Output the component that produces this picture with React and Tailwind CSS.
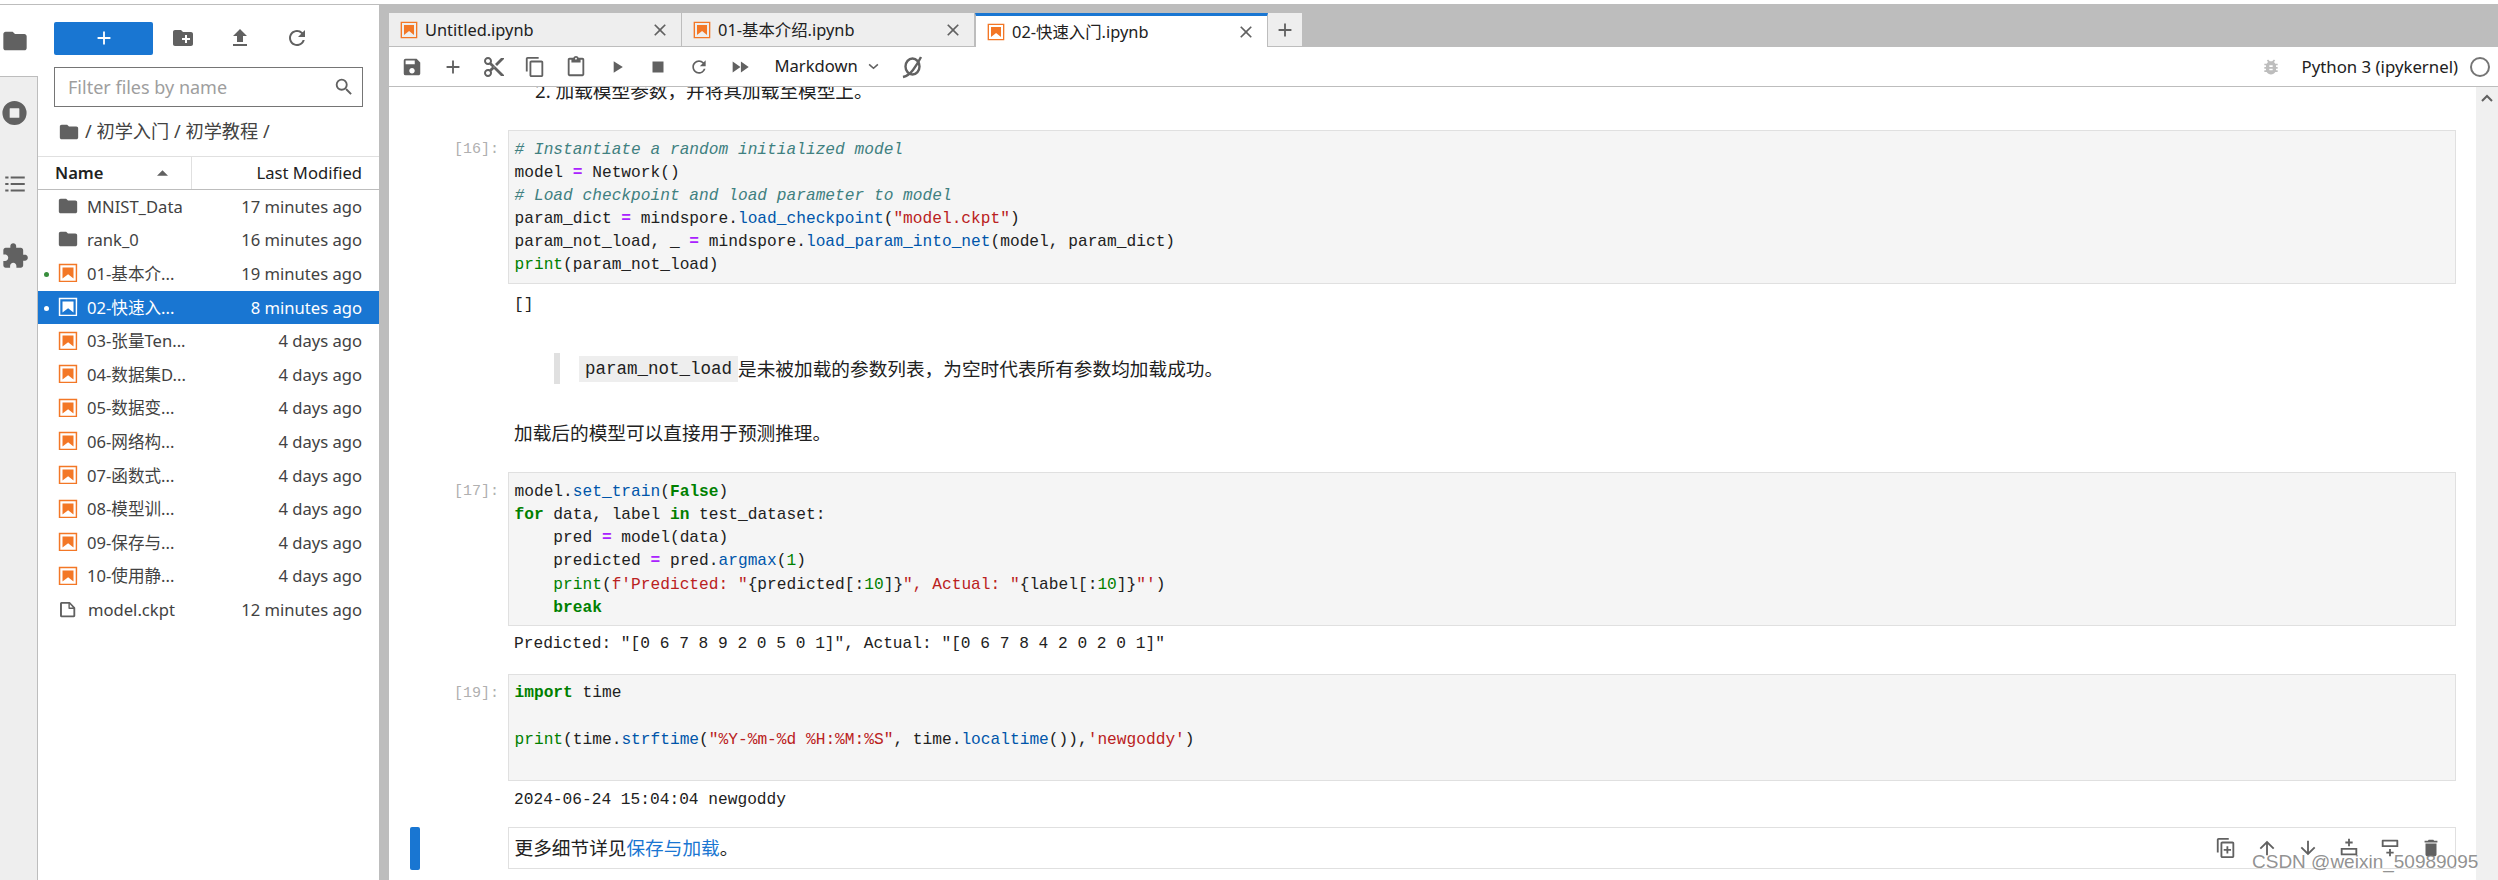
import React from "react";

const P = {
  folder: "M10 4H4c-1.1 0-1.99.9-1.99 2L2 18c0 1.1.9 2 2 2h16c1.1 0 2-.9 2-2V8c0-1.1-.9-2-2-2h-8l-2-2z",
  ext: "M20.5 11H19V7c0-1.1-.9-2-2-2h-4V3.5C13 2.12 11.88 1 10.5 1S8 2.12 8 3.5V5H4c-1.1 0-1.99.9-1.99 2v3.8H3.5c1.49 0 2.7 1.21 2.7 2.7s-1.21 2.7-2.7 2.7H2V20c0 1.1.9 2 2 2h3.8v-1.5c0-1.49 1.21-2.7 2.7-2.7 1.49 0 2.7 1.21 2.7 2.7V22H17c1.1 0 2-.9 2-2v-4h1.5c1.38 0 2.5-1.12 2.5-2.5S21.88 11 20.5 11z",
  newFolder: "M20 6h-8l-2-2H4c-1.11 0-1.99.89-1.99 2L2 18c0 1.11.89 2 2 2h16c1.11 0 2-.89 2-2V8c0-1.11-.89-2-2-2zm-1 8h-3v3h-2v-3h-3v-2h3V9h2v3h3v2z",
  upload: "M9 16h6v-6h4l-7-7-7 7h4zm-4 2h14v2H5z",
  refresh: "M17.65 6.35A7.958 7.958 0 0 0 12 4c-4.42 0-7.99 3.58-7.99 8s3.57 8 7.99 8c3.73 0 6.84-2.55 7.73-6h-2.08A5.99 5.99 0 0 1 12 18c-3.31 0-6-2.69-6-6s2.69-6 6-6c1.66 0 3.14.69 4.22 1.78L13 11h7V4l-2.35 2.35z",
  search: "M15.5 14h-.79l-.28-.27A6.471 6.471 0 0 0 16 9.5 6.5 6.5 0 1 0 9.5 16c1.61 0 3.09-.59 4.23-1.57l.27.28v.79l5 4.99L20.49 19l-4.99-5zm-6 0C7.01 14 5 11.99 5 9.5S7.01 5 9.5 5 14 7.01 14 9.5 11.99 14 9.5 14z",
  save: "M17 3H5a2 2 0 0 0-2 2v14a2 2 0 0 0 2 2h14c1.1 0 2-.9 2-2V7l-4-4zm-5 16c-1.66 0-3-1.34-3-3s1.34-3 3-3 3 1.34 3 3-1.34 3-3 3zm3-10H5V5h10v4z",
  cut: "M9.64 7.64c.23-.5.36-1.05.36-1.64 0-2.21-1.79-4-4-4S2 3.79 2 6s1.79 4 4 4c.59 0 1.14-.13 1.64-.36L10 12l-2.36 2.36C7.14 14.13 6.59 14 6 14c-2.21 0-4 1.79-4 4s1.79 4 4 4 4-1.79 4-4c0-.59-.13-1.14-.36-1.64L12 14l7 7h3v-1L9.64 7.64zM6 8c-1.1 0-2-.89-2-2s.9-2 2-2 2 .89 2 2-.9 2-2 2zm0 12c-1.1 0-2-.89-2-2s.9-2 2-2 2 .89 2 2-.9 2-2 2zm6-7.5c-.28 0-.5-.22-.5-.5s.22-.5.5-.5.5.22.5.5-.22.5-.5.5zM19 3l-6 6 2 2 7-7V3z",
  copy: "M16 1H4c-1.1 0-2 .9-2 2v14h2V3h12V1zm3 4H8c-1.1 0-2 .9-2 2v14c0 1.1.9 2 2 2h11c1.1 0 2-.9 2-2V7c0-1.1-.9-2-2-2zm0 16H8V7h11v14z",
  paste: "M19 2h-4.18C14.4.84 13.3 0 12 0c-1.3 0-2.4.84-2.82 2H5c-1.1 0-2 .9-2 2v16c0 1.1.9 2 2 2h14c1.1 0 2-.9 2-2V4c0-1.1-.9-2-2-2zm-7 0c.55 0 1 .45 1 1s-.45 1-1 1-1-.45-1-1 .45-1 1-1zm7 18H5V4h2v3h10V4h2v16z",
  run: "M8 5v14l11-7z",
  stop: "M6 6h12v12H6z",
  ff: "M4 18l8.5-6L4 6v12zm9-12v12l8.5-6L13 6z",
  plus: "M19 13h-6v6h-2v-6H5v-2h6V5h2v6h6v2z",
  close: "M19 6.41L17.59 5 12 10.59 6.41 5 5 6.41 10.59 12 5 17.59 6.41 19 12 13.41 17.59 19 19 17.59 13.41 12z",
  bug: "M20 8h-2.81a5.985 5.985 0 0 0-1.82-1.96L17 4.41 15.59 3l-2.17 2.17C12.96 5.06 12.49 5 12 5c-.49 0-.96.06-1.41.17L8.41 3 7 4.41l1.62 1.63C7.88 6.55 7.26 7.22 6.81 8H4v2h2.09c-.05.33-.09.66-.09 1v1H4v2h2v1c0 .34.04.67.09 1H4v2h2.81c1.04 1.79 2.97 3 5.19 3s4.15-1.21 5.19-3H20v-2h-2.09c.05-.33.09-.66.09-1v-1h2v-2h-2v-1c0-.34-.04-.67-.09-1H20V8zm-6 8h-4v-2h4v2zm0-4h-4v-2h4v2z",
  list: "M8 5h13v2H8zM8 11h13v2H8zM8 17h13v2H8zM3 5h3v2H3zM3 11h3v2H3zM3 17h3v2H3z",
  stopCircle: "M12 2a10 10 0 1 0 0 20 10 10 0 0 0 0-20zm-4 6.5A.5.5 0 0 1 8.500 8h7a.5.5 0 0 1 .5.5v7a.5.5 0 0 1-.5.5h-7a.5.5 0 0 1-.5-.5z",
  file: "M19.3 8.2l-5.500-5.500c-.3-.3-.7-.5-1.200-.5H3.900c-.8.1-1.600.9-1.600 1.800v14.100c0 .9.7 1.600 1.600 1.600h14.200c.9 0 1.600-.7 1.600-1.600V9.400c.1-.5-.1-.9-.4-1.200zm-5.800-3.300l3.400 3.600h-3.400V4.900zm3.900 12.700H4.700c-.1 0-.2 0-.2-.2V4.700c0-.2.1-.3.2-.3h7.200v4.400s0 .8.3 1.100c.3.3 1.100.3 1.100.3h4.300v7.200s-.1.2-.2.2z",
  dup: "M15 1H4c-1.100 0-2 .9-2 2v14h2V3h11V1zm4 4H8c-1.100 0-2 .9-2 2v14c0 1.100.9 2 2 2h11c1.100 0 2-.9 2-2V7c0-1.100-.9-2-2-2zm0 16H8V7h11v14zm-6.500-11h2v3h3v2h-3v3h-2v-3h-3v-2h3z",
  up: "M4 12l1.410 1.410L11 7.830V20h2V7.830l5.580 5.590L20 12l-8-8-8 8z",
  down: "M20 12l-1.410-1.410L13 16.170V4h-2v12.170l-5.580-5.590L4 12l8 8 8-8z",
  addAbove: "M11 2h2v3h3v2h-3v3h-2V7H8V5h3zM3 12h18v7a1 1 0 0 1-1 1H4a1 1 0 0 1-1-1zm2 2v4h14v-4z",
  addBelow: "M4 3h16a1 1 0 0 1 1 1v7H3V4a1 1 0 0 1 1-1zm1 2v4h14V5zM11 13h2v3h3v2h-3v3h-2v-3H8v-2h3z",
  trash: "M6 19c0 1.100.9 2 2 2h8c1.100 0 2-.9 2-2V7H6v12zM19 4h-3.500l-1-1h-5l-1 1H5v2h14V4z",
};

function Icon({ d, className }) {
  return (
    <svg viewBox="0 0 24 24" className={className} fill="currentColor">
      <path d={d} />
    </svg>
  );
}

function Notebook({ light, className }) {
  const col = light ? "#ffffff" : "#f37726";
  return (
    <svg viewBox="0 0 22 22" className={className} fill={col}>
      <path d="M18.700 3.300v15.400H3.300V3.300h15.400m1.500-1.500H1.800v18.300h18.300l.1-18.300z" />
      <path d="M16.500 16.500l-5.400-4.300-5.600 4.300v-11h11z" />
    </svg>
  );
}

const files = [
  ["folder", "MNIST_Data", "17 minutes ago"],
  ["folder", "rank_0", "16 minutes ago"],
  ["nb", "01-基本介...", "19 minutes ago", "run"],
  ["nb", "02-快速入...", "8 minutes ago", "sel"],
  ["nb", "03-张量Ten...", "4 days ago"],
  ["nb", "04-数据集D...", "4 days ago"],
  ["nb", "05-数据变...", "4 days ago"],
  ["nb", "06-网络构...", "4 days ago"],
  ["nb", "07-函数式...", "4 days ago"],
  ["nb", "08-模型训...", "4 days ago"],
  ["nb", "09-保存与...", "4 days ago"],
  ["nb", "10-使用静...", "4 days ago"],
  ["file", "model.ckpt", "12 minutes ago"],
];

function FileRow({ kind, name, date, state }) {
  const sel = state === "sel";
  return (
    <div className={`h-[33.6px] flex items-center pl-[6px] pr-[17px] pt-[1px] text-[16.6px] ${sel ? "bg-[#1976d2] text-white" : "text-[#424242]"}`}>
      <span className={`w-[5px] h-[5px] rounded-full mr-[10px] ${sel ? "bg-white" : state === "run" ? "bg-[#388e3c]" : ""}`} />
      {kind === "folder" && <Icon d={P.folder} className="w-[22px] h-[22px] -mx-[2px] text-[#616161] -mt-[3px]" />}
      {kind === "nb" && <Notebook light={sel} className="w-[22px] h-[22px] -mx-[2px] -mt-[2px]" />}
      {kind === "file" && <Icon d={P.file} className="w-[21px] h-[21px] -mx-[1px] text-[#616161]" />}
      <span className="ml-[10px] flex-1 whitespace-nowrap">{name}</span>
      <span className="whitespace-nowrap">{date}</span>
    </div>
  );
}

function Tab({ name, active, width }) {
  return (
    <div className={`${width} flex items-center pl-[10px] pr-[11px] text-[16.4px] text-[#212121] ${active ? "bg-white border-t-[3px] border-t-[#1976d2] border-x border-x-[#bdbdbd]" : "bg-[#eeeeee] border-r border-r-[#bdbdbd] border-b border-b-[#bdbdbd]"}`}>
      <Notebook className="w-[20px] h-[20px] shrink-0" />
      <span className="ml-[6px] flex-1 whitespace-nowrap pt-[1px]">{name}</span>
      <Icon d={P.close} className="w-[20px] h-[20px] text-[#616161]" />
    </div>
  );
}

function TB({ d, size = "w-[20px] h-[20px]", color = "text-[#616161]" }) {
  return (
    <div className="w-[41px] flex items-center justify-center">
      <Icon d={d} className={`${size} ${color}`} />
    </div>
  );
}

const cm = "text-[#408080] italic";
const kw = "text-[#008000] font-bold";
const op = "text-[#aa22ff] font-bold";
const st = "text-[#ba2121]";
const pr = "text-[#0055aa]";
const bi = "text-[#008000]";
const nm = "text-[#008000]";

function Line({ parts }) {
  return (
    <div className="h-[23.2px] leading-[23.2px] whitespace-pre">
      {parts.map((p, i) =>
        typeof p === "string" ? <span key={i}>{p}</span> : <span key={i} className={p[1]}>{p[0]}</span>
      )}
    </div>
  );
}

function CodeCell({ n, lines, className = "" }) {
  return (
    <div className={`flex pl-[21px] pr-[20px] ${className}`}>
      <div className="w-[98px] shrink-0 pt-[8px] pr-[9px] text-right leading-[23px] text-[15px] text-[#b0b0b0] [font-family:'Liberation_Mono',monospace] whitespace-nowrap">[{n}]:</div>
      <div className="flex-1 border border-[#e0e0e0] bg-[#f5f5f5] px-[5.500px] pt-[7.500px] pb-[5.500px] [font-family:'Liberation_Mono',monospace] text-[16.2px] text-[#212121]">
        {lines.map((l, i) => <Line key={i} parts={l} />)}
      </div>
    </div>
  );
}

function Output({ text, className = "" }) {
  return (
    <div className={`pl-[125px] [font-family:'Liberation_Mono',monospace] text-[16.2px] leading-[23.2px] text-[#212121] whitespace-pre ${className}`}>{text}</div>
  );
}

export default function App() {
  return (
    <div className="w-[2498px] h-[880px] bg-white relative overflow-hidden flex flex-col [font-family:'Noto_Sans','Noto_Sans_CJK_SC',sans-serif]">
      <div className="h-[5px] bg-white border-b border-[#bdbdbd] shrink-0" />
      <div className="flex-1 flex min-h-0">
        {/* activity bar */}
        <div className="w-[38px] shrink-0 flex flex-col bg-[#eeeeee] border-r border-[#bdbdbd]">
          <div className="h-[71px] bg-white -mr-[1px] flex items-center justify-center pr-[8px]">
            <Icon d={P.folder} className="w-[28px] h-[28px] text-[#616161]" />
          </div>
          <div className="h-[72px] flex items-center justify-center border-t border-[#bdbdbd] pr-[8px]">
            <Icon d={P.stopCircle} className="w-[32px] h-[32px] text-[#616161]" />
          </div>
          <div className="h-[72px] flex items-center justify-center pr-[8px]">
            <Icon d={P.list} className="w-[26px] h-[26px] text-[#616161]" />
          </div>
          <div className="h-[72px] flex items-center justify-center pr-[8px]">
            <Icon d={P.ext} className="w-[28px] h-[28px] text-[#616161]" />
          </div>
        </div>

        {/* file browser */}
        <div className="w-[341px] shrink-0 bg-white flex flex-col">
          <div className="h-[44px] mt-[11px] ml-[16px] flex items-center">
            <div className="w-[99px] h-[33px] rounded-[2px] bg-[#1976d2] flex items-center justify-center">
              <Icon d={P.plus} className="w-[22px] h-[22px] text-white" />
            </div>
            <Icon d={P.newFolder} className="ml-[18px] w-[24px] h-[24px] text-[#616161]" />
            <Icon d={P.upload} className="ml-[33px] w-[24px] h-[24px] text-[#616161]" />
            <Icon d={P.refresh} className="ml-[33px] w-[24px] h-[24px] text-[#616161]" />
          </div>
          <div className="ml-[16px] w-[309px] h-[40px] mt-[7px] border border-[#757575] flex items-center pl-[13px] pr-[7px] text-[18px] text-[#9e9e9e]">
            <span className="flex-1">Filter files by name</span>
            <Icon d={P.search} className="w-[22px] h-[22px] text-[#616161]" />
          </div>
          <div className="h-[49px] flex items-center pl-[20px] text-[18.2px] text-[#424242]">
            <Icon d={P.folder} className="w-[22px] h-[22px] text-[#616161]" />
            <span className="ml-[5px] whitespace-nowrap">/ 初学入门 / 初学教程 /</span>
          </div>
          <div className="h-[34px] flex border-y border-[#e0e0e0] text-[16.6px] text-[#212121] border-b-[#bdbdbd]">
            <div className="w-[154px] border-r border-[#e0e0e0] flex items-center pl-[17px] font-semibold relative">
              Name
              <svg viewBox="0 0 12 6" className="absolute left-[119px] top-[13px] w-[11px] h-[6px]" fill="#616161"><path d="M0 6 6 0l6 6z" /></svg>
            </div>
            <div className="flex-1 flex items-center justify-end pr-[17px]">Last Modified</div>
          </div>
          <div>
            {files.map((f) => <FileRow key={f[1]} kind={f[0]} name={f[1]} date={f[2]} state={f[3]} />)}
          </div>
        </div>

        {/* splitter */}
        <div className="w-[10px] shrink-0 bg-[#bdbdbd]" />

        {/* main */}
        <div className="flex-1 min-w-0 flex flex-col">
          <div className="h-[42px] shrink-0 bg-[#bdbdbd] pt-[8px] flex">
            <Tab name="Untitled.ipynb" width="w-[293px]" />
            <Tab name="01-基本介绍.ipynb" width="w-[293px]" />
            <Tab name="02-快速入门.ipynb" width="w-[293px]" active />
            <div className="w-[34px] bg-[#eeeeee] border-b border-[#bdbdbd] flex items-center justify-center">
              <Icon d={P.plus} className="w-[22px] h-[22px] text-[#616161]" />
            </div>
          </div>
          <div className="h-[40px] shrink-0 flex items-stretch border-b border-[#bdbdbd] pl-[2.500px]">
            <TB d={P.save} size="w-[22px] h-[22px]" />
            <TB d={P.plus} size="w-[22px] h-[22px]" />
            <TB d={P.cut} size="w-[24px] h-[24px]" />
            <TB d={P.copy} size="w-[22px] h-[22px]" />
            <TB d={P.paste} size="w-[22px] h-[22px]" />
            <TB d={P.run} size="w-[20px] h-[20px]" />
            <TB d={P.stop} size="w-[22px] h-[22px]" />
            <TB d={P.refresh} size="w-[20px] h-[20px]" />
            <TB d={P.ff} size="w-[22px] h-[22px]" />
            <div className="ml-[14px] flex items-center text-[16.6px] text-[#212121]">Markdown</div>
            <svg viewBox="0 0 12 8" className="ml-[10px] self-center w-[11px] h-[7px]" fill="none" stroke="#616161" strokeWidth="1.800"><path d="M1 1.500 6 6l5-4.500" /></svg>
            <svg viewBox="0 0 24 24" className="ml-[21px] self-center w-[24px] h-[24px]" fill="none" stroke="#616161" strokeWidth="2.400">
              <ellipse cx="12.500" cy="11.500" rx="7" ry="8" />
              <path d="M3 22C7 21 10 19 13 15C16 11 19 6 21 2" />
            </svg>
            <div className="flex-1" />
            <Icon d={P.bug} className="self-center w-[20px] h-[20px] text-[#bdbdbd]" />
            <div className="ml-[21px] flex items-center text-[16.8px] text-[#212121] whitespace-nowrap">Python 3 (ipykernel)</div>
            <div className="ml-[12px] mr-[8px] self-center w-[20px] h-[20px] rounded-full border-2 border-[#757575]" />
          </div>
          <div className="flex-1 min-h-0 flex">
            <div className="flex-1 min-w-0 overflow-hidden">
              <div className="h-[43px] overflow-hidden pl-[146px] text-[18.67px] text-[#212121] leading-[26px] whitespace-nowrap">
                <div className="-mt-[9px]">2. 加载模型参数，并将其加载至模型上。</div>
              </div>
              <CodeCell
                n="16"
                lines={[
                  [["# Instantiate a random initialized model", cm]],
                  ["model ", ["=", op], " Network()"],
                  [["# Load checkpoint and load parameter to model", cm]],
                  ["param_dict ", ["=", op], " mindspore.", ["load_checkpoint", pr], "(", ['"model.ckpt"', st], ")"],
                  ["param_not_load, _ ", ["=", op], " mindspore.", ["load_param_into_net", pr], "(model, param_dict)"],
                  [["print", bi], "(param_not_load)"],
                ]}
              />
              <Output text="[]" className="mt-[10px]" />
              <div className="mt-[36px] ml-[165px] h-[31px] border-l-[6px] border-[#e0e0e0] pl-[19px] flex items-center text-[18.67px] text-[#212121] whitespace-nowrap">
                <span className="bg-[#eeeeee] px-[6px] [font-family:'Liberation_Mono',monospace] text-[17.5px] leading-[26px]">param_not_load</span>
                <span>是未被加载的参数列表，为空时代表所有参数均加载成功。</span>
              </div>
              <div className="mt-[35px] pl-[125px] text-[18.67px] leading-[28px] text-[#212121] whitespace-nowrap">加载后的模型可以直接用于预测推理。</div>
              <CodeCell
                n="17"
                className="mt-[25px]"
                lines={[
                  ["model.", ["set_train", pr], "(", ["False", kw], ")"],
                  [["for", kw], " data, label ", ["in", kw], " test_dataset:"],
                  ["    pred ", ["=", op], " model(data)"],
                  ["    predicted ", ["=", op], " pred.", ["argmax", pr], "(", ["1", nm], ")"],
                  ["    ", ["print", bi], "(", ["f'Predicted: \"", st], "{predicted[:", ["10", nm], "]}", ['", Actual: "', st], "{label[:", ["10", nm], "]}", ["\"'", st], ")"],
                  ["    ", ["break", kw]],
                ]}
              />
              <Output text={'Predicted: "[0 6 7 8 9 2 0 5 0 1]", Actual: "[0 6 7 8 4 2 0 2 0 1]"'} className="mt-[7px]" />
              <CodeCell
                n="19"
                className="mt-[17px]"
                lines={[
                  [["import", kw], " time"],
                  [" "],
                  [["print", bi], "(time.", ["strftime", pr], "(", ['"%Y-%m-%d %H:%M:%S"', st], ", time.", ["localtime", pr], "()),", ["'newgoddy'", st], ")"],
                  [" "],
                ]}
              />
              <Output text="2024-06-24 15:04:04 newgoddy" className="mt-[8px]" />
              <div className="mt-[14px] flex pl-[21px] pr-[20px]">
                <div className="w-[10px] h-[43px] rounded-[2px] bg-[#1976d2] shrink-0" />
                <div className="w-[88px] shrink-0" />
                <div className="flex-1 h-[42px] border border-[#e0e0e0] flex items-center pl-[5.500px] pr-[13px] text-[18.67px] text-[#212121] whitespace-nowrap">
                  <span>更多细节详见</span>
                  <span className="text-[#1976d2]">保存与加载</span>
                  <span>。</span>
                  <div className="flex-1" />
                  <div className="flex items-center gap-[19px] text-[#616161]">
                    <Icon d={P.dup} className="w-[22px] h-[22px]" />
                    <Icon d={P.up} className="w-[22px] h-[22px]" />
                    <Icon d={P.down} className="w-[22px] h-[22px]" />
                    <Icon d={P.addAbove} className="w-[22px] h-[22px]" />
                    <Icon d={P.addBelow} className="w-[22px] h-[22px]" />
                    <Icon d={P.trash} className="w-[22px] h-[22px]" />
                  </div>
                </div>
              </div>
            </div>
            <div className="w-[22px] shrink-0 bg-[#f0f0f0] flex justify-center pt-[7px]">
              <svg viewBox="0 0 12 8" className="w-[12px] h-[8px]" fill="none" stroke="#616161" strokeWidth="2"><path d="M1 7 6 2l5 5" /></svg>
            </div>
          </div>
        </div>
      </div>
      <div className="absolute left-[2252px] top-[850px] text-[19px] leading-[24px] text-[#757575]/80 whitespace-nowrap [font-family:'Liberation_Sans',sans-serif]">CSDN @weixin_50989095</div>
    </div>
  );
}
